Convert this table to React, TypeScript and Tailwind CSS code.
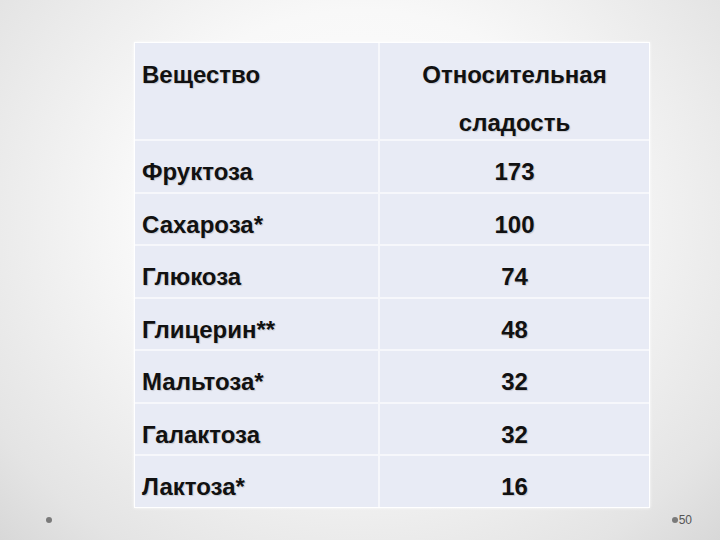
import { Fragment } from "react";

const rows: [string, string][] = [
  ["Фруктоза", "173"],
  ["Сахароза*", "100"],
  ["Глюкоза", "74"],
  ["Глицерин**", "48"],
  ["Мальтоза*", "32"],
  ["Галактоза", "32"],
  ["Лактоза*", "16"],
];

const text =
  "text-[24px] font-bold text-[#111] [text-shadow:1px_1px_1px_rgba(0,0,0,0.15)]";

export default function App() {
  return (
    <div
      className="flex h-[540px] w-[720px] flex-col overflow-hidden bg-[radial-gradient(ellipse_at_50%_40%,#ffffff_0%,#f8f8f8_45%,#e4e4e4_85%,#d8d8d8_100%)]"
      style={{ fontFamily: '"Liberation Sans", Arial, sans-serif' }}
    >
      <div className="ml-[134px] mt-[42px] w-[516px] bg-white p-[1px] shadow-[0_0_3px_rgba(255,255,255,0.9)]">
        <div className="grid grid-cols-[243px_1fr] gap-[2px] bg-[#f6f7fb]">
          <div className={`h-[96px] bg-[#e8ebf5] pl-[7px] pt-[8px] leading-[48px] ${text}`}>
            Вещество
          </div>
          <div className={`h-[96px] bg-[#e8ebf5] pt-[8px] text-center leading-[48px] ${text}`}>
            Относительная
            <br />
            сладость
          </div>
          {rows.map(([name, value]) => (
            <Fragment key={name}>
              <div className={`flex h-[50.5px] items-center bg-[#e8ebf5] pl-[7px] pt-[12px] ${text}`}>
                {name}
              </div>
              <div className={`flex h-[50.5px] items-center justify-center bg-[#e8ebf5] pt-[12px] ${text}`}>
                {value}
              </div>
            </Fragment>
          ))}
        </div>
      </div>
      <div className="mt-[3px] flex items-center justify-between pl-[46px] pr-[28px]">
        <span className="h-[6px] w-[6px] rounded-full bg-[#7a7a7a]" />
        <div className="flex items-center gap-[1px]">
          <span className="h-[6px] w-[6px] rounded-full bg-[#7a7a7a]" />
          <span className="text-[12px] text-[#555]">50</span>
        </div>
      </div>
    </div>
  );
}
